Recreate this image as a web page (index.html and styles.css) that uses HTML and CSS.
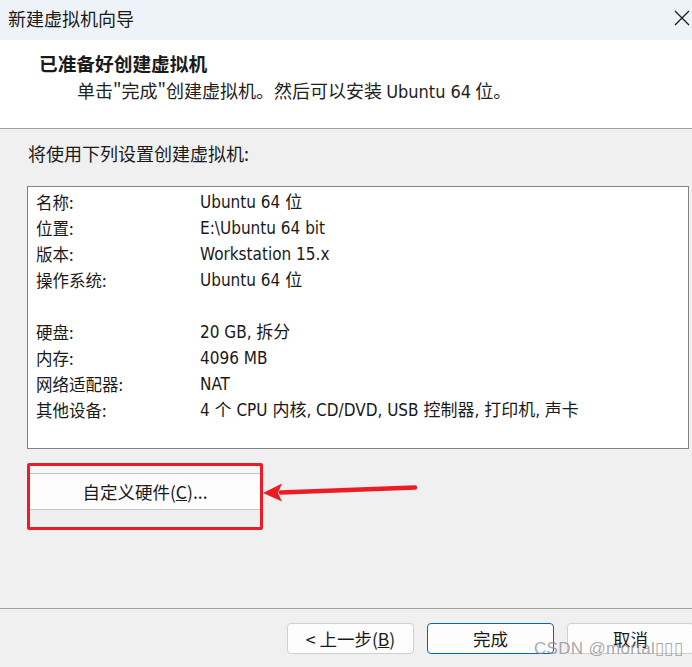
FILE: index.html
```html
<!DOCTYPE html>
<html lang="zh-CN">
<head>
    <meta charset="UTF-8">
    <meta name="viewport" content="width=device-width, initial-scale=1.0">
    <title>新建虚拟机向导</title>
    <link rel="stylesheet" href="styles.css">
</head>
<body>
    <div class="window">
        <div class="titlebar">
            <span class="title">新建虚拟机向导</span>
            <svg class="close" width="16" height="16" viewBox="0 0 16 16">
                <path d="M1 1 L15 15 M15 1 L1 15" stroke="#1a1a1a" stroke-width="1.3" fill="none"/>
            </svg>
        </div>

        <div class="header">
            <div class="heading">已准备好创建虚拟机</div>
            <div class="subheading">单击"完成"创建虚拟机。然后可以安装 <span class="latin">Ubuntu 64</span> 位。</div>
        </div>

        <div class="main">
            <div class="intro">将使用下列设置创建虚拟机:</div>

            <div class="summary">
                <div class="row"><span class="label">名称:</span><span class="value">Ubuntu 64 位</span></div>
                <div class="row"><span class="label">位置:</span><span class="value">E:\Ubuntu 64 bit</span></div>
                <div class="row"><span class="label">版本:</span><span class="value">Workstation 15.x</span></div>
                <div class="row"><span class="label">操作系统:</span><span class="value">Ubuntu 64 位</span></div>
                <div class="row"></div>
                <div class="row"><span class="label">硬盘:</span><span class="value">20 GB, 拆分</span></div>
                <div class="row"><span class="label">内存:</span><span class="value">4096 MB</span></div>
                <div class="row"><span class="label">网络适配器:</span><span class="value">NAT</span></div>
                <div class="row"><span class="label">其他设备:</span><span class="value">4 个 CPU 内核, CD/DVD, USB 控制器, 打印机, 声卡</span></div>
            </div>

            <div class="custom-area">
                <div class="highlight">
                    <button class="custom-btn">自定义硬件(<u>C</u>)...</button>
                </div>
                <!-- annotation arrow pointing at the button -->
                <svg class="arrow" width="170" height="30" viewBox="0 0 170 30">
                    <path d="M18 13.5 L152 8.5" stroke="#ed1c24" stroke-width="4.5" stroke-linecap="round" fill="none"/>
                    <path d="M0 14 L19 4.5 L15 14 L19 22.5 Z" fill="#ed1c24"/>
                </svg>
            </div>
        </div>

        <div class="footer">
            <button class="btn">&lt; 上一步(<u>B</u>)</button>
            <button class="btn primary">完成</button>
            <button class="btn">取消</button>
        </div>

        <div class="watermark">CSDN @mortal▯▯▯</div>
    </div>
</body>
</html>
```

FILE: styles.css
```css
html, body { margin: 0; padding: 0; }
body {
    font-family: "Noto Sans CJK SC", sans-serif;
    background-color: #f0f0f0;
    color: #1a1a1a;
    overflow: hidden;
}
.window {
    position: relative;
    width: 692px;
    height: 667px;
    display: flex;
    flex-direction: column;
    overflow: hidden;
}
.titlebar {
    height: 40px;
    flex: none;
    background: #eef3f9;
    display: flex;
    align-items: center;
    justify-content: space-between;
    padding: 0 2px 0 8px;
    box-sizing: border-box;
}
.title { font-size: 18px; line-height: 24px; margin-top: -5px; }
.close { margin-top: -5px; }

.header {
    flex: none;
    height: 89px;
    box-sizing: border-box;
    background: #fff;
    border-bottom: 1px solid #a0a0a0;
    padding: 10px 0 0 39px;
}
.heading { font-size: 18.7px; font-weight: bold; line-height: 26px; }
.subheading { font-size: 18px; line-height: 26px; margin: 1px 0 0 38px; color: #222; }
.latin, .value { font-family: "DejaVu Sans Condensed", "Liberation Sans", "Noto Sans CJK SC", sans-serif; }

.main { flex: 1; padding: 11px 3px 0 27px; }
.intro { font-size: 18px; line-height: 26px; padding-left: 1px; }
.summary {
    margin-top: 20px;
    height: 263px;
    box-sizing: border-box;
    background: #fff;
    border: 1px solid #828282;
    padding: 2px 0 0 8px;
    font-size: 16px;
}
.row { display: flex; height: 26px; line-height: 26px; }
.label { width: 164px; flex: none; font-size: 16.5px; }
.value { font-size: 17px; }

.custom-area { position: relative; margin-top: 14px; }
.highlight {
    width: 236px;
    height: 67px;
    box-sizing: border-box;
    border: 3px solid #ed1c24;
    border-radius: 2px;
    background: #efefef;
    padding-top: 7px;
    overflow: hidden;
}
.highlight::before {
    content: "";
    display: block;
    height: 7px;
    margin-top: -7px;
    background: #f7f7f7;
}
.custom-btn {
    display: block;
    width: 100%;
    height: 37px;
    border: 0;
    border-top: 1px solid #c4c4c4;
    border-bottom: 1px solid #c4c4c4;
    background: #fcfcfc;
    font-family: "Noto Sans CJK SC", sans-serif;
    font-size: 17.5px;
    color: #1a1a1a;
    padding: 0;
}
.arrow { position: absolute; left: 236px; top: 16px; }

.footer {
    flex: none;
    height: 59px;
    box-sizing: border-box;
    border-top: 1px solid #a0a0a0;
    padding: 14px 0 0 287px;
    display: flex;
    gap: 13px;
}
.btn {
    flex: none;
    width: 127px;
    height: 31px;
    border: 1px solid #d0d0d0;
    border-radius: 4px;
    background: #fdfdfd;
    font-family: "Noto Sans CJK SC", sans-serif;
    font-size: 17.5px;
    color: #1a1a1a;
    padding: 0;
}
.btn.primary { border-color: #0067c0; }

.watermark {
    position: absolute;
    left: 534px;
    top: 638px;
    font-family: "Liberation Sans", sans-serif;
    font-size: 17px;
    color: rgba(140, 140, 140, 0.75);
    letter-spacing: 0.3px;
}
```
